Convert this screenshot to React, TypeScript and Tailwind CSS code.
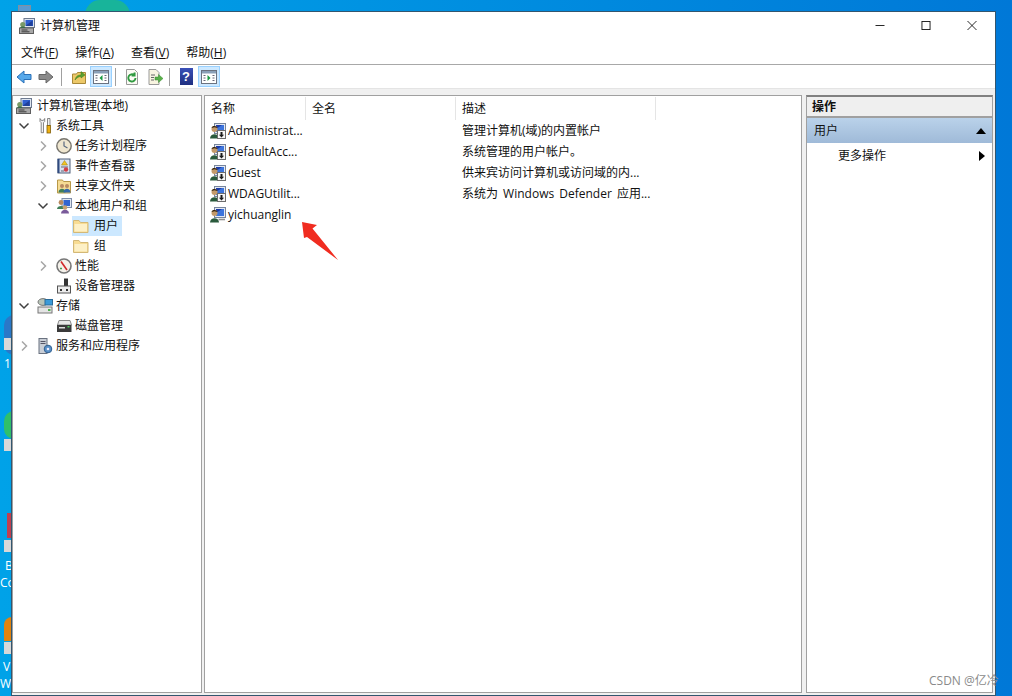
import React from "react";

const font = { fontFamily: '"Open Sans","Noto Sans CJK SC",sans-serif' };

const Computer = ({ className = "" }: { className?: string }) => (
  <svg viewBox="0 0 16 16" width="16" height="16" className={`shrink-0 ${className}`}>
    <rect x="5" y="0.5" width="10.5" height="9" fill="#dfe6f0" stroke="#6d7a90" />
    <rect x="6.5" y="2" width="7.5" height="6" fill="#2f5fd0" />
    <path d="M7 7.5 13.5 2.5V8H7z" fill="#1f3f9a" />
    <rect x="0.5" y="10" width="14" height="5.5" fill="#a8a8a8" stroke="#5e5e5e" />
    <path d="M2.5 12h6M2.5 13.8h8" stroke="#3c3c3c" />
    <circle cx="3.8" cy="6.5" r="2.6" fill="#7a9a68" />
    <path d="M1 10c0-2 5-2 5.5 0z" fill="#3b6a4a" />
  </svg>
);

const UserIcon = ({ down = true }: { down?: boolean }) => (
  <svg viewBox="0 0 16 16" width="16" height="16" className="shrink-0">
    <rect x="4.5" y="0.5" width="11" height="10" fill="#e4e9f2" stroke="#77859c" />
    <rect x="6" y="2" width="8" height="7" fill="#3c74dc" />
    <path d="M6 6 12 2H6z" fill="#1d3ba6" />
    <circle cx="4.5" cy="6" r="3" fill="#c49a6a" />
    <path d="M1.5 5C2.5 2.3 6.5 2.5 7.5 5L4.5 4.3z" fill="#33240f" />
    <path d="M0 15.5C0 9.8 9 9.8 9 15.5z" fill="#2a5a3c" />
    {down ? (
      <>
        <rect x="7.5" y="7.5" width="8" height="8" fill="#f7f7f7" stroke="#6c6c6c" />
        <path d="M10.5 9h2v2.8h1.6l-2.6 2.6-2.6-2.6h1.6z" fill="#1c1c1c" />
      </>
    ) : (
      <path d="M8.5 12.5h6.5" stroke="#8f8f8f" strokeWidth="1.6" />
    )}
  </svg>
);

const Folder = () => (
  <svg viewBox="0 0 16 16" width="16" height="16" className="shrink-0">
    <path d="M.5 14.5V2.5h5.5l1.5 2h7.5v10z" fill="#f8dc92" stroke="#d3b877" />
    <path d="M1.5 13.5V6h12.5v7.5z" fill="#fdf0c6" />
  </svg>
);

const Chevron = ({ open }: { open?: boolean }) => (
  <svg viewBox="0 0 12 12" width="12" height="12" className="shrink-0">
    {open ? (
      <path d="M1.5 3.5 6 8l4.5-4.5" fill="none" stroke="#404040" strokeWidth="1.5" />
    ) : (
      <path d="M4 1.5 8.5 6 4 10.5" fill="none" stroke="#a6a6a6" strokeWidth="1.5" />
    )}
  </svg>
);

const Tools = () => (
  <svg viewBox="0 0 16 16" width="16" height="16">
    <path d="M3 .5v3l1.2 1.2v10h2.3V4.7L7.7 3.5v-3L6.4 2.4H4.3z" fill="#f0f0f0" stroke="#6c6c6c" strokeWidth=".8" />
    <path d="M10.5.5h2.5v7h-2.5z" fill="#f0f0f0" stroke="#6c6c6c" strokeWidth=".8" />
    <rect x="10" y="7.5" width="3.5" height="7.5" fill="#eeb012" stroke="#7f5c06" strokeWidth=".8" />
  </svg>
);
const Clock = () => (
  <svg viewBox="0 0 16 16" width="16" height="16">
    <circle cx="8" cy="8" r="7.2" fill="#efe6cf" stroke="#77756e" strokeWidth="1.4" />
    <path d="M8 3.5V8l3.5 2" fill="none" stroke="#5a6a80" strokeWidth="1.2" />
  </svg>
);
const EventLog = () => (
  <svg viewBox="0 0 16 16" width="16" height="16">
    <rect x="2" y="1" width="12" height="14" fill="#d8e2f0" stroke="#50607a" />
    <path d="M2.5 1v14" stroke="#2f4a80" strokeWidth="2" />
    <path d="M8.5 2.5 11.5 7h-6z" fill="#f2c420" stroke="#9a7a10" strokeWidth=".5" />
    <path d="M5 9h7M5 13h3" stroke="#667" />
    <circle cx="10" cy="11.5" r="2.2" fill="#d04048" />
  </svg>
);
const Share = () => (
  <svg viewBox="0 0 16 16" width="16" height="16">
    <path d="M1.5 15V2h5l1 1.5h7V15z" fill="#f6dc94" stroke="#b89848" />
    <circle cx="6" cy="8" r="2" fill="#b98a60" />
    <path d="M2.5 14.5c0-5 7-5 7 0z" fill="#3f7f58" />
    <circle cx="11" cy="8" r="2" fill="#b98a60" />
    <path d="M7.5 14.5c0-5 7-5 7 0z" fill="#3468a8" />
  </svg>
);
const Users = () => (
  <svg viewBox="0 0 16 16" width="16" height="16">
    <rect x="6" y="0.5" width="9.5" height="9" fill="#dfe6f0" stroke="#7e8da8" />
    <rect x="7.5" y="2" width="6.5" height="6" fill="#3264d0" />
    <circle cx="5" cy="4.5" r="2.4" fill="#b98a60" />
    <path d="M1 11c0-4 8-4 8 0z" fill="#3f7f58" />
    <circle cx="9" cy="9.5" r="2.3" fill="#c9a070" />
    <path d="M5 15.5c0-5 8-5 8 0z" fill="#7a5a9a" />
  </svg>
);
const Perf = () => (
  <svg viewBox="0 0 16 16" width="16" height="16">
    <circle cx="8" cy="8" r="7" fill="#f4f1ea" stroke="#777" strokeWidth="1.6" />
    <path d="M5 3.5 11 12" stroke="#d02828" strokeWidth="1.6" />
    <path d="M4 10.5h2" stroke="#4a9a50" strokeWidth="1.4" />
  </svg>
);
const Device = () => (
  <svg viewBox="0 0 16 16" width="16" height="16">
    <rect x="8" y="0.5" width="4" height="7.5" fill="#333" />
    <rect x="1.5" y="8" width="13" height="7" fill="#ececec" stroke="#555" />
    <rect x="4" y="11" width="2" height="2" fill="#333" />
    <rect x="10" y="11" width="2" height="2" fill="#333" />
  </svg>
);
const Storage = () => (
  <svg viewBox="0 0 16 16" width="16" height="16">
    <ellipse cx="6" cy="4" rx="5" ry="3.4" fill="#b8c4b8" stroke="#777" />
    <rect x="8" y="1.5" width="7.5" height="5.5" fill="#3a9ad8" stroke="#2a6a98" />
    <rect x="1" y="9" width="14" height="6" fill="#e4e4e4" stroke="#777" />
    <rect x="11" y="11" width="2.5" height="2" fill="#50b050" />
  </svg>
);
const Disk = () => (
  <svg viewBox="0 0 16 16" width="16" height="16">
    <path d="M3 2.5h11L15.5 7h-14z" fill="#e8e8e8" stroke="#888" />
    <rect x="1" y="7" width="14.5" height="7" fill="#3a3a3a" />
    <rect x="3" y="9" width="6" height="1.5" fill="#ddd" />
    <rect x="11.5" y="8" width="2" height="1.5" fill="#4fd060" />
  </svg>
);
const Services = () => (
  <svg viewBox="0 0 16 16" width="16" height="16">
    <rect x="2" y="0.5" width="8" height="15" fill="#c9ced6" stroke="#6a7280" />
    <path d="M3.5 3.5h5M3.5 5.5h5" stroke="#556" />
    <circle cx="11" cy="11" r="3.8" fill="#5a90c8" stroke="#2f5f90" />
    <circle cx="11" cy="11" r="1.3" fill="#eef" />
  </svg>
);

const ToolBtn = ({ active, children, className = "" }: { active?: boolean; children: React.ReactNode; className?: string }) => (
  <div
    className={`flex h-[21px] w-[22px] items-center justify-center border ${active ? "border-[#99d1ff] bg-[#cce8ff]" : "border-transparent"} ${className}`}
  >
    {children}
  </div>
);

const Sep = ({ className = "" }: { className?: string }) => <div className={`mx-[3px] h-[18px] w-px bg-[#a0a0a0] ${className}`} />;

const PanelGlyph = ({ dir }: { dir: "l" | "r" }) => (
  <svg viewBox="0 0 16 16" width="16" height="16">
    <rect x="0.5" y="1.5" width="15" height="13" fill="#fff" stroke="#6a7280" />
    <rect x="1" y="2" width="14" height="2.5" fill="#8aa0b8" />
    <path d="M2.5 6.5h2M2.5 9h2M2.5 11.5h2M11.5 6.5h2M11.5 9h2M11.5 11.5h2" stroke="#667" />
    <path d={dir === "l" ? "M9.5 6 6.5 9l3 3z" : "M6.5 6l3 3-3 3z"} fill="#1a9a40" />
  </svg>
);

const Tree = ({
  indent, chev, open, icon, label,
}: { indent: number; chev?: boolean; open?: boolean; icon: React.ReactNode; label: string }) => (
  <div className="flex h-5 items-center" style={{ paddingLeft: indent }}>
    <div className="flex w-[19px] shrink-0 justify-start">{chev ? <Chevron open={open} /> : null}</div>
    <span className="flex w-4 shrink-0 items-center">{icon}</span>
    <span className="ml-[3px] whitespace-nowrap">{label}</span>
  </div>
);

const FolderRow = ({ label, selected }: { label: string; selected?: boolean }) => (
  <div className="flex h-5 items-center pl-[59px]">
    <div className={`flex h-5 items-center pl-px pr-[4px] ${selected ? "bg-[#cce8ff]" : ""}`}>
      <Folder />
      <span className="ml-[5px]">{label}</span>
    </div>
  </div>
);

const rows = [
  ["Administrat...", "管理计算机(域)的内置帐户", true],
  ["DefaultAcc...", "系统管理的用户帐户。", true],
  ["Guest", "供来宾访问计算机或访问域的内...", true],
  ["WDAGUtilit...", "系统为 Windows Defender 应用...", true],
  ["yichuanglin", "", false],
] as const;

export default function App() {
  return (
    <div
      className="relative h-[696px] w-[1012px] overflow-hidden bg-gradient-to-r from-[#00a2e8] to-[#0078d7] pl-[11px] pt-[11px] text-[12px] text-[#111]"
      style={font}
    >
      {/* desktop fragments behind the window */}
      <div className="absolute left-[85px] top-0 h-[30px] w-[45px] rounded-full bg-[#18b49a]" />
      <div className="absolute left-[18px] top-[5px] h-[14px] w-[13px] border border-[#8090a0] bg-[#5a9ad0]" />
      <div className="absolute left-[4px] top-[315px] h-[40px] w-[20px] rounded-full bg-[#2a78c8]" />
      <div className="absolute left-[4px] top-[411px] h-[28px] w-[20px] rounded-full bg-[#2fc06a]" />
      <div className="absolute left-[7px] top-[513px] h-[25px] w-[8px] bg-[#c04050]" />
      <div className="absolute left-[4px] top-[617px] h-[24px] w-[20px] rounded-t-lg bg-[#e08410]" />
      <div className="absolute left-[4px] top-[338px] h-[12px] w-[8px] bg-[#d8d8d8]" />
      <div className="absolute left-[4px] top-[439px] h-[12px] w-[8px] bg-[#d8d8d8]" />
      <div className="absolute left-[4px] top-[540px] h-[12px] w-[8px] bg-[#d8d8d8]" />
      <div className="absolute left-[4px] top-[642px] h-[12px] w-[8px] bg-[#d8d8d8]" />
      <span className="absolute left-[4px] top-[355px] text-white">1</span>
      <span className="absolute left-[5px] top-[557px] text-white">B</span>
      <span className="absolute left-0 top-[574px] text-white">Co</span>
      <span className="absolute left-[3px] top-[658px] text-white">V</span>
      <span className="absolute left-0 top-[675px] text-white">Wo</span>

      <div className="relative flex h-[685px] w-[985px] flex-col border border-[#33566f] bg-white">
        {/* title bar */}
        <div className="flex h-[29px] shrink-0 items-center pb-[2px] pl-[7px]">
          <Computer />
          <span className="ml-[5px]">计算机管理</span>
          <div className="ml-auto flex items-center">
            <svg viewBox="0 0 46 30" width="46" height="27"><path d="M18 15h10" stroke="#111" /></svg>
            <svg viewBox="0 0 46 30" width="46" height="27"><rect x="18.5" y="10.5" width="9" height="9" fill="none" stroke="#111" /></svg>
            <svg viewBox="0 0 46 30" width="46" height="27"><path d="M18 10l10 10M28 10 18 20" stroke="#111" /></svg>
          </div>
        </div>
        {/* menu */}
        <div className="flex h-[24px] shrink-0 items-center gap-[17px] border-b border-[#a8a8a8] pl-[9px]">
          <span>文件(<u>F</u>)</span>
          <span>操作(<u>A</u>)</span>
          <span>查看(<u>V</u>)</span>
          <span>帮助(<u>H</u>)</span>
        </div>
        {/* toolbar */}
        <div className="flex h-[23px] shrink-0 items-center pl-[1px]">
          <ToolBtn>
            <svg viewBox="0 0 16 14" width="16" height="14"><path d="M1 7l7-6v3.5h7v5H8V13z" fill="#56a8ea" stroke="#2a70b8" /></svg>
          </ToolBtn>
          <ToolBtn>
            <svg viewBox="0 0 16 14" width="16" height="14"><path d="M15 7 8 1v3.5H1v5h7V13z" fill="#8a8a8a" stroke="#666" /></svg>
          </ToolBtn>
          <Sep className="ml-[4px]" />
          <ToolBtn className="ml-[3px]">
            <svg viewBox="0 0 16 16" width="16" height="16">
              <path d="M1.5 14.5V5h4l1-1.5h8v11z" fill="#ecc868" stroke="#a88838" />
              <path d="M4 11c1-4 3-5 6-5V2.5L14 6l-4 3V7.5c-2 0-4 1-6 3.5z" fill="#5aa030" stroke="#3a7a18" strokeWidth=".5" />
            </svg>
          </ToolBtn>
          <ToolBtn active><PanelGlyph dir="l" /></ToolBtn>
          <Sep />
          <ToolBtn className="ml-[2px]">
            <svg viewBox="0 0 16 16" width="16" height="16">
              <path d="M2.5 .5h8l3 3v12h-11z" fill="#fbfbf4" stroke="#999" />
              <path d="M11.5 9a3.6 3.6 0 1 1-1.2-2.8M10.6 3.5v3H7.6" fill="none" stroke="#2f9a40" strokeWidth="1.9" />
            </svg>
          </ToolBtn>
          <ToolBtn className="ml-px">
            <svg viewBox="0 0 16 16" width="16" height="16">
              <path d="M2 .5h7l3 3v12H2z" fill="#f8f4e0" stroke="#999" />
              <path d="M4 6h4M4 8.5h3M4 11h3" stroke="#666" />
              <path d="M8 8h3.5V5.5L16 9.5l-4.5 4V11H8z" fill="#58b048" stroke="#3a8a30" strokeWidth=".5" />
            </svg>
          </ToolBtn>
          <Sep />
          <ToolBtn className="ml-[2px]">
            <div className="flex h-[17px] w-[13px] items-center justify-center bg-gradient-to-b from-[#3a50b8] to-[#1f2f80] text-[13px] font-bold text-white" style={{ fontFamily: '"Liberation Sans",sans-serif' }}>?</div>
          </ToolBtn>
          <ToolBtn active className="ml-px"><PanelGlyph dir="r" /></ToolBtn>
        </div>
        {/* panes */}
        <div className="flex min-h-0 flex-1 gap-[2px] border-t border-[#e4e4e4] bg-[#f0f0f0] pt-[6px] pr-[2px] pb-[2px]">
          <div className="w-[190px] shrink-0 border border-[#a0a0a0] bg-white">
            <div className="flex h-5 items-center pl-[3px]">
              <Computer />
              <span className="ml-[5px] whitespace-nowrap">计算机管理(本地)</span>
            </div>
            <Tree indent={5} chev open icon={<Tools />} label="系统工具" />
            <Tree indent={24} chev icon={<Clock />} label="任务计划程序" />
            <Tree indent={24} chev icon={<EventLog />} label="事件查看器" />
            <Tree indent={24} chev icon={<Share />} label="共享文件夹" />
            <Tree indent={24} chev open icon={<Users />} label="本地用户和组" />
            <FolderRow label="用户" selected />
            <FolderRow label="组" />
            <Tree indent={24} chev icon={<Perf />} label="性能" />
            <Tree indent={24} icon={<Device />} label="设备管理器" />
            <Tree indent={5} chev open icon={<Storage />} label="存储" />
            <Tree indent={24} icon={<Disk />} label="磁盘管理" />
            <Tree indent={5} chev icon={<Services />} label="服务和应用程序" />
          </div>
          <div className="w-[598px] shrink-0 border border-[#a0a0a0] bg-white">
            <div className="flex h-[24px] items-start pt-px">
              <div className="w-[101px] border-r border-[#e5e5e5] pl-[6px] leading-[23px]">名称</div>
              <div className="w-[150px] border-r border-[#e5e5e5] pl-[6px] leading-[23px]">全名</div>
              <div className="w-[200px] border-r border-[#e5e5e5] pl-[6px] leading-[23px]">描述</div>
            </div>
            {rows.map(([name, desc, down]) => (
              <div key={name} className="flex h-[21px] items-center">
                <div className="flex w-[251px] items-center pl-[5px]">
                  <UserIcon down={down} />
                  <span className="ml-[2px] whitespace-nowrap">{name}</span>
                </div>
                <div className="whitespace-nowrap pl-[6px] [word-spacing:2px]">{desc}</div>
              </div>
            ))}
          </div>
          <div className="ml-[2px] min-w-0 flex-1 border border-t-2 border-[#a0a0a0] border-t-[#808080] bg-white">
            <div className="flex h-[21px] items-center border-b-2 border-[#a0a0a0] bg-[#efefef] pl-[5px] font-semibold">操作</div>
            <div className="flex h-[25px] items-center justify-between bg-gradient-to-b from-[#bad2ea] to-[#9fbad8] pl-[7px] pr-[6px]">
              <span>用户</span>
              <svg viewBox="0 0 10 6" width="10" height="6"><path d="M0 6 5 0l5 6z" fill="#000" /></svg>
            </div>
            <div className="flex h-[25px] items-center justify-between pl-[31px] pr-[7px]">
              <span>更多操作</span>
              <svg viewBox="0 0 6 10" width="6" height="10"><path d="M0 0l6 5-6 5z" fill="#000" /></svg>
            </div>
          </div>
        </div>
      </div>

      {/* red annotation arrow */}
      <svg className="absolute left-[295px] top-[215px]" viewBox="0 0 50 50" width="50" height="50">
        <path d="M7 7 22 10 17.5 13.5 43 45 12 22 9 23z" fill="#f02c20" />
      </svg>
      <span className="absolute left-[929px] top-[672px] text-[#8a8a8a]">CSDN @亿冷</span>
    </div>
  );
}
